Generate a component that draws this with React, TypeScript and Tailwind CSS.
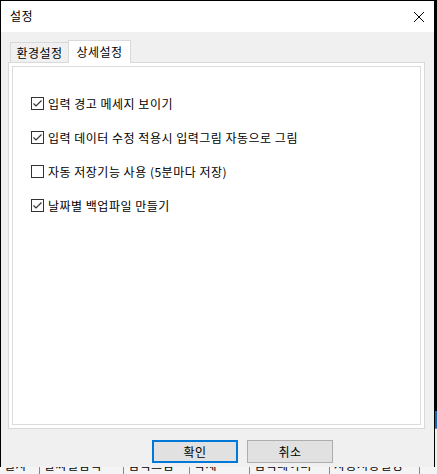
import React from 'react';

const font = { fontFamily: '"Noto Sans CJK KR", "Noto Sans", sans-serif' };

const options = [
    { label: '입력 경고 메세지 보이기', checked: true },
    { label: '입력 데이터 수정 적용시 입력그림 자동으로 그림', checked: true },
    { label: '자동 저장기능 사용 (5분마다 저장)', checked: false },
    { label: '날짜별 백업파일 만들기', checked: true },
];

function CheckBox({ checked }: { checked: boolean }) {
    return (
        <span className="w-[13px] h-[13px] border border-[#333333] bg-white flex items-center justify-center shrink-0">
            {checked && (
                <svg width="11" height="11" viewBox="0 0 11 11" fill="none">
                    <path d="M1.5 5.5 L4 8 L9.5 2.5" stroke="#333333" strokeWidth="1.2" />
                </svg>
            )}
        </span>
    );
}

export default function App() {
    return (
        <div className="w-[437px] h-[474px] flex flex-col overflow-hidden bg-black text-black text-[12px] leading-none tracking-[0.5px]" style={font}>
            <div className="flex flex-1 min-h-0">
                {/* dialog */}
                <div className="w-[433px] ml-px mt-px flex flex-col bg-[#f0f0f0]">
                    <div className="h-[31px] bg-white flex items-center justify-between pl-[9px] pr-[10px]">
                        <span className="pb-[2px]">설정</span>
                        <svg width="10" height="10" viewBox="0 0 10 10" className="mt-[1px]">
                            <path d="M0 0 L10 10 M10 0 L0 10" stroke="#000" strokeWidth="1" />
                        </svg>
                    </div>

                    <div className="flex flex-col pl-[7px] pt-[8px]">
                        {/* tabs */}
                        <div className="flex items-end h-[22px] pl-[2px]">
                            <div className="h-[20px] w-[58px] border-t border-l border-[#d9d9d9] bg-[#f0f0f0] flex items-center justify-center">
                                환경설정
                            </div>
                            <div className="relative z-10 h-[23px] -mb-px w-[63px] border-t border-l border-r border-[#d9d9d9] bg-white flex items-start justify-center pt-[5px]">
                                상세설정
                            </div>
                        </div>

                        {/* panel */}
                        <div className="w-[417px] h-[367px] border border-[#d9d9d9] bg-white p-[3px]">
                            <div className="h-full border border-[#dcdcdc] flex flex-col gap-[21px] pl-[18px] pt-[30px]">
                                {options.map((o) => (
                                    <div key={o.label} className="flex items-center h-[13px] gap-[4px]">
                                        <CheckBox checked={o.checked} />
                                        <span className="whitespace-nowrap">{o.label}</span>
                                    </div>
                                ))}
                            </div>
                        </div>

                        {/* buttons */}
                        <div className="flex gap-[9px] pl-[144px] pt-[11px]">
                            <button className="w-[86px] h-[23px] border-2 border-[#0078d7] bg-[#e1e1e1] flex items-center justify-center">
                                확인
                            </button>
                            <button className="w-[86px] h-[23px] border border-[#adadad] bg-[#e1e1e1] flex items-center justify-center">
                                취소
                            </button>
                        </div>
                    </div>
                </div>

                {/* outside, right edge */}
                <div className="flex-1 flex flex-col">
                    <div className="h-[411px]" />
                    <div className="h-[17px] bg-[#1c64a8] ml-px" />
                    <div className="flex-1 bg-[#f0f0f0] ml-px border-t border-[#888]" />
                </div>
            </div>

            {/* outside, bottom edge */}
            <div className="h-[7px] bg-[#f4f4f4] overflow-hidden flex text-[12px]">
                <div className="flex -mt-[8px] whitespace-nowrap">
                    <span className="w-[40px] border-r border-[#888] pl-[4px]">일자</span>
                    <span className="w-[84px] border-r border-[#888] pl-[4px]">날짜별입력</span>
                    <span className="w-[66px] border-r border-[#888] pl-[4px]">입력그림</span>
                    <span className="w-[60px] border-r border-[#888] pl-[4px]">삭제</span>
                    <span className="w-[80px] border-r border-[#888] pl-[4px]">입력데이터</span>
                    <span className="w-[90px] border-r border-[#888] pl-[4px]">자동저장설정</span>
                </div>
            </div>
        </div>
    );
}
